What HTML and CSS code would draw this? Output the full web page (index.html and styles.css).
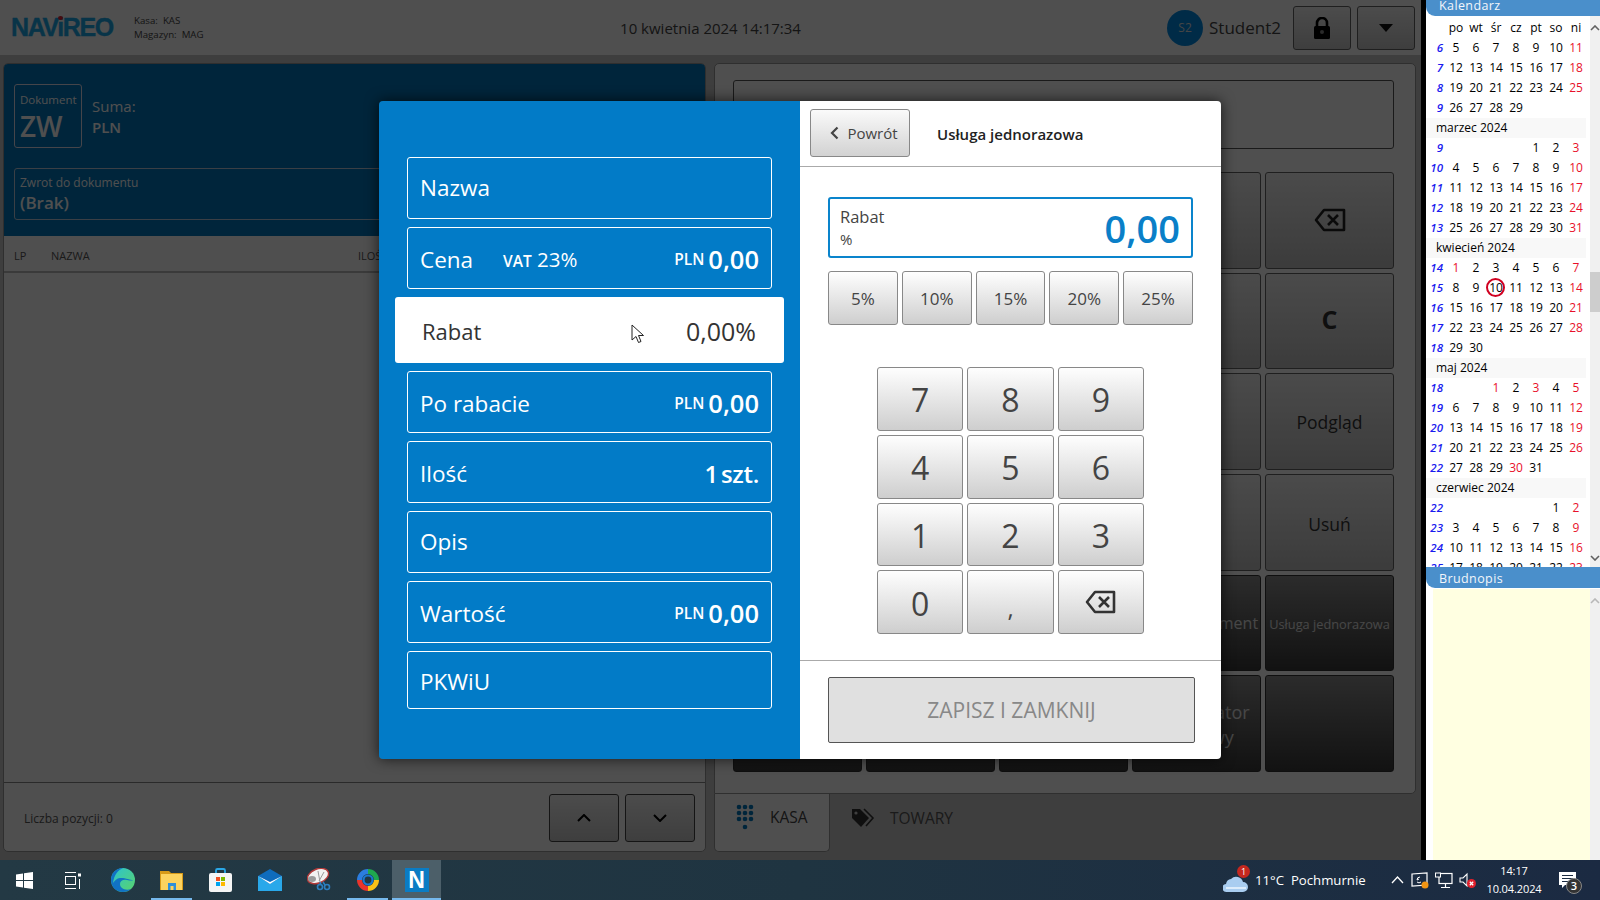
FILE: index.html
```html
<!DOCTYPE html>
<html lang="pl">
<head>
<meta charset="utf-8">
<title>Navireo Kasa</title>
<link rel="stylesheet" href="styles.css">
</head>
<body>
<div class="screen">
  <div class="app">
    <header class="topbar">
      <div class="brand">
        <div class="logo">NAV<span class="logo-i">i</span>REO</div>
        <div class="station"><div>Kasa:&nbsp; KAS</div><div>Magazyn:&nbsp; MAG</div></div>
      </div>
      <div class="clock">10 kwietnia 2024 14:17:34</div>
      <div class="userbox">
        <div class="avatar">S2</div>
        <div class="username">Student2</div>
        <button class="tool">
          <svg width="18" height="22" viewBox="0 0 18 22"><path d="M4 9V6a5 5 0 0 1 10 0v3" fill="none" stroke="#000" stroke-width="2.6"/><rect x="1" y="9" width="16" height="13" rx="1.5" fill="#000"/><circle cx="9" cy="15" r="2" fill="#888"/></svg>
        </button>
        <button class="tool"><svg width="14" height="8" viewBox="0 0 14 8"><path d="M0 0h14L7 8z" fill="#111"/></svg></button>
      </div>
    </header>

    <div class="work">
      <section class="receipt">
        <div class="doc-head">
          <div class="doc-row">
            <div class="doc-type"><div class="doc-label">Dokument</div><div class="doc-code">ZW</div></div>
            <div class="doc-sum"><div>Suma:</div><div class="doc-cur">PLN</div></div>
          </div>
          <div class="doc-ref"><div class="doc-ref-label">Zwrot do dokumentu</div><div class="doc-ref-val">(Brak)</div></div>
        </div>
        <div class="table-head"><span class="th-lp">LP</span><span class="th-name">NAZWA</span><span>ILOŚĆ</span></div>
        <div class="table-body"></div>
        <div class="receipt-foot">
          <div class="count">Liczba pozycji: 0</div>
          <button class="pager"><svg width="14" height="8" viewBox="0 0 14 8"><path d="M1 7l6-6 6 6" fill="none" stroke="#000" stroke-width="2"/></svg></button>
          <button class="pager"><svg width="14" height="8" viewBox="0 0 14 8"><path d="M1 1l6 6 6-6" fill="none" stroke="#000" stroke-width="2"/></svg></button>
        </div>
      </section>

      <section class="register">
        <div class="cash">
          <div class="search"></div>
          <div class="keys">
            <div class="key"></div><div class="key"></div><div class="key"></div><div class="key"></div>
            <div class="key"><svg width="32" height="24" viewBox="0 0 32 24"><path d="M10 2h20v20H10L2 12z" fill="none" stroke="#222" stroke-width="2.6" stroke-linejoin="round"/><path d="M14 7l10 10M24 7L14 17" stroke="#222" stroke-width="2.6"/></svg></div>
            <div class="key"></div><div class="key"></div><div class="key"></div><div class="key"></div>
            <div class="key key-c">C</div>
            <div class="key"></div><div class="key"></div><div class="key"></div><div class="key"></div>
            <div class="key">Podgląd</div>
            <div class="key"></div><div class="key"></div><div class="key"></div><div class="key"></div>
            <div class="key key-low">Usuń</div>
            <div class="key dark"></div><div class="key dark"></div><div class="key dark"></div>
            <div class="key dark">Nowy dokument</div>
            <div class="key dark key-small">Usługa jednorazowa</div>
            <div class="key dark"></div><div class="key dark"></div><div class="key dark"></div>
            <div class="key dark key-big">Konfigurator<br>kwotowy</div>
            <div class="key dark"></div>
          </div>
        </div>
        <div class="tabs">
          <div class="tab tab-on">
            <svg width="18" height="26" viewBox="0 0 18 26"><g fill="#0077be"><circle cx="3" cy="3" r="2.3"/><circle cx="9" cy="3" r="2.3"/><circle cx="15" cy="3" r="2.3"/><circle cx="3" cy="9" r="2.3"/><circle cx="9" cy="9" r="2.3"/><circle cx="15" cy="9" r="2.3"/><circle cx="3" cy="15" r="2.3"/><circle cx="9" cy="15" r="2.3"/><circle cx="15" cy="15" r="2.3"/><circle cx="9" cy="23" r="2.3"/></g></svg>
            <span>KASA</span>
          </div>
          <div class="tab">
            <svg width="24" height="20" viewBox="0 0 24 20"><path d="M1 1h8l9 9-8 9-9-9z" fill="#333"/><circle cx="5" cy="5" r="1.6" fill="#ccc"/><path d="M13 1l9 9-7 8" fill="none" stroke="#333" stroke-width="1.6"/></svg>
            <span>TOWARY</span>
          </div>
        </div>
      </section>
    </div>

    <div class="dim"></div>

    <div class="modal">
      <div class="fields">
        <div class="field field-up"><span class="label">Nazwa</span></div>
        <div class="field"><span class="label">Cena</span><span class="vat"><b>VAT</b> 23%</span><span class="amount"><b>PLN</b> <strong>0,00</strong></span></div>
        <div class="field-active"><span>Rabat</span><span class="pct">0,00%</span>
          <svg class="cursor" width="13" height="20" viewBox="0 0 13 20"><path d="M1 1v15l4-3.5 2.5 6 2.5-1-2.5-6h5z" fill="#fff" stroke="#222" stroke-width="1"/></svg>
        </div>
        <div class="field"><span class="label">Po rabacie</span><span class="amount"><b>PLN</b> <strong>0,00</strong></span></div>
        <div class="field"><span class="label">Ilość</span><span class="amount"><strong class="qty">1 szt.</strong></span></div>
        <div class="field field-up"><span class="label">Opis</span></div>
        <div class="field"><span class="label">Wartość</span><span class="amount"><b>PLN</b> <strong>0,00</strong></span></div>
        <div class="field field-last"><span class="label">PKWiU</span></div>
      </div>
      <div class="editor">
        <div class="editor-head">
          <button class="back"><svg width="9" height="14" viewBox="0 0 9 14"><path d="M7.5 1.5L2 7l5.5 5.5" fill="none" stroke="#444" stroke-width="2.2"/></svg>Powrót</button>
          <div class="editor-title">Usługa jednorazowa</div>
        </div>
        <div class="entry">
          <div><div class="entry-label">Rabat</div><div class="entry-unit">%</div></div>
          <div class="entry-val">0,00</div>
        </div>
        <div class="presets">
          <button class="btn">5%</button><button class="btn">10%</button><button class="btn">15%</button><button class="btn">20%</button><button class="btn">25%</button>
        </div>
        <div class="pad">
          <button class="btn">7</button><button class="btn">8</button><button class="btn">9</button>
          <button class="btn">4</button><button class="btn">5</button><button class="btn">6</button>
          <button class="btn">1</button><button class="btn">2</button><button class="btn">3</button>
          <button class="btn">0</button><button class="btn comma">,</button>
          <button class="btn btn-ic"><svg width="31" height="24" viewBox="0 0 31 24"><path d="M10 2h19v20H10L2 12z" fill="none" stroke="#333" stroke-width="2.6" stroke-linejoin="round"/><path d="M14 7l10 10M24 7L14 17" stroke="#333" stroke-width="2.6"/></svg></button>
        </div>
        <div class="save-bar"><button class="save">ZAPISZ I ZAMKNIJ</button></div>
      </div>
    </div>
  </div>

  <aside class="sidebar">
    <div class="side-title cal-title">Kalendarz</div>
    <div class="cal-wrap">
      <div class="cal">
        <span></span><span>po</span><span>wt</span><span>śr</span><span>cz</span><span>pt</span><span>so</span><span>ni</span>
        <i>6</i><span>5</span><span>6</span><span>7</span><span>8</span><span>9</span><span>10</span><span class="r">11</span>
        <i>7</i><span>12</span><span>13</span><span>14</span><span>15</span><span>16</span><span>17</span><span class="r">18</span>
        <i>8</i><span>19</span><span>20</span><span>21</span><span>22</span><span>23</span><span>24</span><span class="r">25</span>
        <i>9</i><span>26</span><span>27</span><span>28</span><span>29</span>
        <div class="month">marzec 2024</div>
        <i>9</i><span></span><span></span><span></span><span></span><span>1</span><span>2</span><span class="r">3</span>
        <i>10</i><span>4</span><span>5</span><span>6</span><span>7</span><span>8</span><span>9</span><span class="r">10</span>
        <i>11</i><span>11</span><span>12</span><span>13</span><span>14</span><span>15</span><span>16</span><span class="r">17</span>
        <i>12</i><span>18</span><span>19</span><span>20</span><span>21</span><span>22</span><span>23</span><span class="r">24</span>
        <i>13</i><span>25</span><span>26</span><span>27</span><span>28</span><span>29</span><span>30</span><span class="r">31</span>
        <div class="month">kwiecień 2024</div>
        <i>14</i><span class="r">1</span><span>2</span><span>3</span><span>4</span><span>5</span><span>6</span><span class="r">7</span>
        <i>15</i><span>8</span><span>9</span><span class="today">10</span><span>11</span><span>12</span><span>13</span><span class="r">14</span>
        <i>16</i><span>15</span><span>16</span><span>17</span><span>18</span><span>19</span><span>20</span><span class="r">21</span>
        <i>17</i><span>22</span><span>23</span><span>24</span><span>25</span><span>26</span><span>27</span><span class="r">28</span>
        <i>18</i><span>29</span><span>30</span>
        <div class="month">maj 2024</div>
        <i>18</i><span></span><span></span><span class="r">1</span><span>2</span><span class="r">3</span><span>4</span><span class="r">5</span>
        <i>19</i><span>6</span><span>7</span><span>8</span><span>9</span><span>10</span><span>11</span><span class="r">12</span>
        <i>20</i><span>13</span><span>14</span><span>15</span><span>16</span><span>17</span><span>18</span><span class="r">19</span>
        <i>21</i><span>20</span><span>21</span><span>22</span><span>23</span><span>24</span><span>25</span><span class="r">26</span>
        <i>22</i><span>27</span><span>28</span><span>29</span><span class="r">30</span><span>31</span>
        <div class="month">czerwiec 2024</div>
        <i>22</i><span></span><span></span><span></span><span></span><span></span><span>1</span><span class="r">2</span>
        <i>23</i><span>3</span><span>4</span><span>5</span><span>6</span><span>7</span><span>8</span><span class="r">9</span>
        <i>24</i><span>10</span><span>11</span><span>12</span><span>13</span><span>14</span><span>15</span><span class="r">16</span>
        <i>25</i><span>17</span><span>18</span><span>19</span><span>20</span><span>21</span><span>22</span><span class="r">23</span>
      </div>
      <div class="sbar">
        <svg class="sb-up" width="10" height="6" viewBox="0 0 10 6"><path d="M1 5l4-4 4 4" fill="none" stroke="#606060" stroke-width="1.6"/></svg>
        <div class="sb-thumb"></div>
        <svg class="sb-down" width="10" height="6" viewBox="0 0 10 6"><path d="M1 1l4 4 4-4" fill="none" stroke="#606060" stroke-width="1.6"/></svg>
      </div>
    </div>
    <div class="side-title">Brudnopis</div>
    <div class="note-wrap">
      <div class="note"></div>
      <div class="sbar">
        <svg class="sb-up" width="10" height="6" viewBox="0 0 10 6"><path d="M1 5l4-4 4 4" fill="none" stroke="#b8b8b8" stroke-width="1.6"/></svg>
      </div>
    </div>
  </aside>

  <footer class="taskbar">
    <div class="tb-app"><svg width="17" height="17" viewBox="0 0 17 17"><path d="M0 2.4l7-1v6.6H0zM8 1.2L17 0v8H8zM0 9h7v6.6l-7-1zM8 9h9v8l-9-1.2z" fill="#fff"/></svg></div>
    <div class="tb-app"><svg width="17" height="17" viewBox="0 0 17 17"><g fill="none" stroke="#fff" stroke-width="1"><path d="M0 .5h11M0 16.5h11"/><rect x=".5" y="4.5" width="10" height="8"/><path d="M14.5 7v10"/></g><rect x="13" y="1.5" width="3" height="3" fill="#fff"/></svg></div>
    <div class="tb-app"><svg width="24" height="24" viewBox="0 0 24 24"><defs><linearGradient id="e1" x1="0" y1="0" x2="1" y2="1"><stop offset="0" stop-color="#2bc3d2"/><stop offset="1" stop-color="#5ad36a"/></linearGradient></defs><circle cx="12" cy="12" r="12" fill="url(#e1)"/><path d="M12 0C5 0 0 5 0 12c0 7 5 12 12 12 3 0 6-1 8-3-6 2-11-1-11-5 0-3 3-5 7-4 3 .5 5 1 6 0-3 0-12-4-16-1-2 1-3 3-4 4C3 7 7 2 12 0z" fill="#1172c4"/></svg></div>
    <div class="tb-app"><svg width="23" height="21" viewBox="0 0 23 21"><path d="M0 1h9l2 2h12v17H0z" fill="#d79a18"/><rect x="1" y="4" width="21" height="16" fill="#fcd35f"/><path d="M8 13h8v7h-2.5v-4h-3v4H8z" fill="#2e8fd8"/></svg></div>
    <div class="tb-app"><svg width="23" height="24" viewBox="0 0 23 24"><path d="M7 6V2.5a1.5 1.5 0 0 1 1.5-1.5h6A1.5 1.5 0 0 1 16 2.5V6" fill="none" stroke="#2aa8e8" stroke-width="1.8"/><rect y="5" width="23" height="19" rx="2" fill="#f5f5f5"/><rect x="7" y="9" width="4" height="4" fill="#f25022"/><rect x="12" y="9" width="4" height="4" fill="#7fba00"/><rect x="7" y="14" width="4" height="4" fill="#00a4ef"/><rect x="12" y="14" width="4" height="4" fill="#ffb900"/></svg></div>
    <div class="tb-app"><svg width="24" height="22" viewBox="0 0 24 22"><path d="M0 7L12 0l12 7v15H0z" fill="#0f6cbd"/><path d="M0 7l12 8 12-8v15H0z" fill="#29a8ea"/><path d="M0 7l12 6 12-6-12 8z" fill="#fff"/></svg></div>
    <div class="tb-app"><svg width="24" height="24" viewBox="0 0 24 24"><ellipse cx="11" cy="8" rx="11" ry="7" transform="rotate(-22 11 8)" fill="#f2f2f2" stroke="#b23a3a" stroke-width="1.4"/><ellipse cx="5" cy="11" rx="4" ry="3" fill="#9a9a9a"/><path d="M11 3l2 11M17 4l-5 9" stroke="#999" stroke-width="1"/><circle cx="13" cy="19" r="2.5" fill="none" stroke="#2d7fc0" stroke-width="1.6"/><circle cx="20" cy="19" r="2.5" fill="none" stroke="#2d7fc0" stroke-width="1.6"/><path d="M13 14l1 3M16 14l2 3" stroke="#2d7fc0" stroke-width="1.6"/></svg></div>
    <div class="tb-app"><svg width="24" height="24" viewBox="0 0 24 24"><g fill="none" stroke-width="5"><path d="M3.5 12A8.5 8.5 0 0 1 12 3.5" stroke="#2b7de0"/><path d="M12 3.5A8.5 8.5 0 0 1 20.5 12" stroke="#1fa84f"/><path d="M20.5 12A8.5 8.5 0 0 1 12 20.5" stroke="#f9c116"/><path d="M12 20.5A8.5 8.5 0 0 1 3.5 12" stroke="#e8342c"/></g><circle cx="12" cy="12" r="4.5" fill="none" stroke="#1a78d0" stroke-width="2.2"/></svg></div>
    <div class="tb-app tb-active"><div class="n-icon">N</div></div>
    <div class="tray">
      <div class="weather">
        <svg width="25" height="22" viewBox="0 0 25 22"><path d="M4 21a4 4 0 0 1-1-8 6 6 0 0 1 5-5 7 7 0 0 1 12 3 5 5 0 0 1 0 10z" fill="#a9cdf0"/><path d="M3 17h20" stroke="#dcecfb" stroke-width="2"/></svg>
        <span class="wx-badge">1</span>
      </div>
      <div class="wx-text">11°C&nbsp; Pochmurnie</div>
      <svg class="tray-up" width="13" height="8" viewBox="0 0 13 8"><path d="M1 7l5.5-6L12 7" fill="none" stroke="#fff" stroke-width="1.3"/></svg>
      <div class="tray-ic"><svg width="18" height="17" viewBox="0 0 18 17"><path d="M1 2l15-1v12L1 14z" fill="none" stroke="#fff" stroke-width="1.2"/><path d="M9 5a3 3 0 0 0-3 3l2-1M6 10a3 3 0 0 0 4 0" fill="none" stroke="#fff"/><circle cx="14" cy="13" r="3.5" fill="#f29513"/></svg></div>
      <div class="tray-ic"><svg width="18" height="17" viewBox="0 0 18 17"><rect x="4" y="1.5" width="13" height="10" fill="none" stroke="#fff" stroke-width="1.2"/><rect x=".5" y="1" width="5" height="4" fill="#1c2c42" stroke="#fff"/><path d="M10.5 12v3M6 15.5h9" stroke="#fff" stroke-width="1.2"/></svg></div>
      <div class="tray-ic"><svg width="18" height="17" viewBox="0 0 18 17"><path d="M1 6h3l4-4v12l-4-4H1z" fill="none" stroke="#fff" stroke-width="1.1"/><circle cx="12.5" cy="11.5" r="4.5" fill="#e0202c"/><path d="M10.8 9.800l3.4 3.4M14.2 9.800l-3.4 3.4" stroke="#fff" stroke-width="1.3"/></svg></div>
      <div class="tb-clock"><div>14:17</div><div>10.04.2024</div></div>
      <div class="notif">
        <svg width="17" height="16" viewBox="0 0 17 16"><path d="M0 0h17v13H6l-3 3v-3H0z" fill="#fff"/><path d="M3 3.5h11M3 6.5h11M3 9.5h8" stroke="#1c2c42" stroke-width="1"/></svg>
        <span class="notif-badge">3</span>
      </div>
    </div>
  </footer>
</div>
</body>
</html>
```

FILE: styles.css
```css
* { box-sizing: border-box; }
html, body { margin: 0; padding: 0; background: #000; }
body { font-family: "Open Sans", "Liberation Sans", sans-serif; }
button { font-family: inherit; padding: 0; margin: 0; cursor: default; }

.screen {
  width: 1600px; height: 900px; overflow: hidden;
  display: grid;
  grid-template-columns: 1421px 174px;
  grid-template-rows: 860px 40px;
  column-gap: 5px;
}

/* application behind the dialog */
.app {
  position: relative; overflow: hidden;
  display: flex; flex-direction: column;
  background: #c8c8c8;
}
.topbar {
  height: 55px; flex: none; background: #fff;
  display: grid; grid-template-columns: 1fr auto 1fr; align-items: center;
}
.brand { display: flex; align-items: center; padding-left: 11px; }
.logo {
  font-family: "Liberation Sans", sans-serif; font-weight: 700; font-size: 25px;
  letter-spacing: -1.4px; color: #1aa8e8; width: 103px; line-height: 1;
  -webkit-text-stroke: .4px #1aa8e8;
}
.logo-i { position: relative; }
.logo-i::after {
  content: ""; position: absolute; left: 1px; top: 3px; width: 5px; height: 4px;
  border-radius: 50%; background: #e02030;
}
.station { margin-left: 20px; font-size: 9.7px; line-height: 14px; color: #444; }
.clock { font-size: 15px; color: #444; }
.userbox { display: flex; align-items: center; justify-content: flex-end; padding-right: 6px; }
.avatar {
  width: 36px; height: 36px; border-radius: 50%; background: #038be5; color: #ddd;
  display: flex; align-items: center; justify-content: center; font-size: 12px; margin-right: 6px;
}
.username { font-size: 17px; color: #444; margin-right: 12px; }
.tool {
  width: 58px; height: 44px; margin-left: 6px;
  display: flex; align-items: center; justify-content: center;
  border: 1px solid #666; border-radius: 3px;
  background: linear-gradient(#f4f4f4, #c8c8c8);
}
.tool:first-of-type { margin-left: 0; }

.work { flex: 1; display: flex; gap: 8px; padding: 8px 5px 8px 3px; min-height: 0; }
.receipt, .register { min-width: 0; display: flex; flex-direction: column; }
.receipt { flex: none; width: 703px; background: #fff; border: 1px solid #999; border-radius: 5px; overflow: hidden; }
.register { flex: 1; min-height: 0; }

.doc-head { height: 172px; flex: none; background: #0077be; padding: 20px 10px 0 10px; color: #fff; }
.doc-row { display: flex; }
.doc-type { width: 68px; height: 64px; border: 1px solid #dde; border-radius: 3px; padding: 7px 5px; }
.doc-label { font-size: 11.5px; line-height: 16px; }
.doc-code { font-size: 28px; line-height: 36px; font-weight: 600; }
.doc-sum { margin: 12px 0 0 10px; font-size: 15px; line-height: 21px; }
.doc-cur { font-weight: 600; }
.doc-ref { margin-top: 20px; height: 52px; width: 680px; border: 1px solid #bcd; border-radius: 3px; padding: 6px 5px; }
.doc-ref-label { font-size: 12px; line-height: 16px; }
.doc-ref-val { font-size: 17px; line-height: 24px; font-weight: 600; }
.table-head {
  height: 37px; flex: none; display: flex; align-items: center; padding: 3px 0 0 10px;
  font-size: 11px; color: #555; border-bottom: 2px solid #bbb;
}
.th-lp { width: 37px; }
.th-name { width: 307px; }
.table-body { flex: 1; }
.receipt-foot {
  height: 69px; flex: none; border-top: 1px solid #888;
  display: flex; align-items: center; padding: 1px 10px 0 20px; gap: 6px;
}
.count { font-size: 12px; color: #555; margin-right: auto; padding-top: 2px; }
.pager {
  width: 70px; height: 48px;
  display: flex; align-items: center; justify-content: center;
  border: 1px solid #444; border-radius: 3px; background: linear-gradient(#f4f4f4, #c8c8c8);
}

.cash {
  height: 731px; flex: none; background: #fff; border: 1px solid #999; border-radius: 5px 5px 5px 0;
  padding: 16px 21px 0 18px;
}
.search { height: 69px; border: 1px solid #555; border-radius: 3px; }
.keys {
  margin-top: 23px; display: grid;
  grid-template-columns: repeat(5, 1fr); grid-auto-rows: 96.7px; gap: 4px;
}
.key {
  display: flex; align-items: center; justify-content: center; text-align: center;
  border: 1px solid #666; border-radius: 3px; font-size: 17.5px; color: #333;
  background: linear-gradient(#f0f0f0, #c0c0c0);
}
.key-c { font-size: 25px; font-weight: 700; padding-bottom: 4px; }
.key-low { padding-top: 3px; }
.key.dark { background: linear-gradient(#8c8c8c, #3a3a3a); border-color: #333; color: #e4e4e4; font-size: 16px; }
.key-small.dark { font-size: 12.8px; padding-top: 2px; }
.key-big.dark { font-size: 18px; line-height: 25px; padding-top: 2px; }

.tabs { height: 58px; flex: none; display: flex; }
.tab {
  display: flex; align-items: center; padding: 0 0 11px 22px; gap: 15px;
  font-size: 15.5px; color: #555;
}
.tab-on {
  width: 116px; background: #fff; border: 1px solid #999; border-top: 0; border-radius: 0 0 5px 5px;
  padding-left: 21px; gap: 16px; color: #444;
}
.tab-on + .tab { padding-left: 21px; }

.dim { position: absolute; inset: 0; background: rgba(0, 0, 0, .69); }

/* dialog */
.modal {
  position: absolute; left: 379px; top: 101px; width: 842px; height: 658px;
  display: grid; grid-template-columns: 421px 421px;
  border-radius: 4px; overflow: hidden;
  box-shadow: 0 0 14px rgba(0, 0, 0, .7);
}
.fields {
  background: #027bc7; padding: 56px 28px 0;
  display: flex; flex-direction: column; gap: 8px; color: #fff;
}
.field {
  height: 62px; flex: none; border: 1px solid #fff; border-radius: 3px;
  display: flex; align-items: center; padding: 2px 12px 0;
}
.field-up { padding: 0 12px 2px; }
.field-last { height: 58px; }
.label { font-size: 22.5px; }
.vat { font-size: 20.5px; margin-left: 30px; }
.vat b { font-size: 15.5px; font-weight: 600; }
.amount { margin-left: auto; display: flex; align-items: center; gap: 4px; }
.amount b { font-size: 15.5px; font-weight: 600; }
.amount strong { font-size: 25.5px; font-weight: 600; }
.amount .qty { font-size: 24px; word-spacing: -3px; letter-spacing: -.3px; }
.field-active {
  position: relative;
  height: 66px; flex: none; margin: 0 -12px; background: #fff; border-radius: 3px; color: #333;
  display: flex; align-items: center; justify-content: space-between; padding: 2px 28px 0 27px;
  font-size: 22px;
}
.pct { font-size: 25px; font-weight: 500; }
.cursor { position: absolute; left: 236px; top: 27px; }

.editor { background: #fff; display: flex; flex-direction: column; }
.editor-head {
  height: 66px; flex: none; border-bottom: 1px solid #aaa;
  display: flex; align-items: center; padding: 0 0 1px 10px;
}
.back {
  width: 100px; height: 48px; border: 1px solid #888; border-radius: 3px;
  background: linear-gradient(#fafafa, #d2d2d2);
  display: flex; align-items: center; justify-content: center; gap: 8px;
  font-size: 15px; color: #444; padding-left: 8px;
}
.editor-title { margin-left: 27px; padding-top: 2px; font-size: 15px; font-weight: 600; color: #222; }
.entry {
  margin: 30px 0 0 28px; width: 365px; height: 61px; flex: none;
  border: 2px solid #0a84cc; border-radius: 3px;
  display: flex; justify-content: space-between; align-items: center; padding: 1px 11px 0 10px;
}
.entry-label { font-size: 16.5px; line-height: 22px; color: #444; }
.entry-unit { font-size: 15px; line-height: 23px; color: #444; }
.entry-val { font-size: 38px; font-weight: 600; color: #0a7fc8; }
.btn {
  display: flex; align-items: center; justify-content: center;
  border: 1px solid #888; border-radius: 3px;
  background: linear-gradient(#fefefe, #cecece); color: #444;
}
.presets {
  margin: 13px 0 0 28px; width: 365px; flex: none; height: 54px;
  display: grid; grid-template-columns: repeat(5, 1fr); gap: 4px;
}
.presets .btn { font-size: 17px; }
.pad {
  margin: 42px 0 0 77px; width: 267px; flex: none;
  display: grid; grid-template-columns: repeat(3, 1fr); grid-auto-rows: 63.75px; gap: 4px;
}
.pad .btn { font-size: 32px; padding-top: 2px; }
.pad .comma { font-size: 24px; padding-top: 10px; }
.pad .btn-ic { padding-top: 0; }
.save-bar { margin-top: 26px; border-top: 1px solid #aaa; padding: 16px 0 0 28px; flex: 1; }
.save {
  width: 367px; height: 66px; background: #e0e0e0; border: 1px solid #555; border-radius: 2px;
  font-size: 21px; font-weight: 500; color: #888;
}

/* right sidebar */
.sidebar { background: #fff; display: flex; flex-direction: column; min-height: 0; }
.side-title {
  height: 21px; flex: none; background: #4a8fcb; color: #f2f6fa;
  border-radius: 0 0 0 9px; padding-left: 13px;
  font-size: 12.5px; letter-spacing: .4px; line-height: 23px;
}
.cal-title { height: 16px; line-height: 12px; }
.cal-wrap { height: 551px; flex: none; display: flex; overflow: hidden; }
.cal {
  width: 164px; flex: none; padding-top: 2px; align-self: flex-start;
  display: grid; grid-template-columns: repeat(8, 20px); grid-auto-rows: 20px;
  font-size: 12px; line-height: 20px; text-align: center; color: #000;
}
.cal i { font-weight: 600; color: #1a1aef; text-align: right; padding-right: 3px; font-size: 11.5px; }
.cal .r { color: #e8102a; }
.month { grid-column: 1 / -1; background: #f8f8f8; text-align: left; padding-left: 10px; }
.today { position: relative; }
.today::after {
  content: ""; position: absolute; left: 0; top: 0; width: 19px; height: 19px; box-sizing: border-box;
  border: 2px solid #d00020; border-radius: 50%;
}
.sbar { width: 10px; flex: none; background: #f0f0f0; display: flex; flex-direction: column; }
.sb-up { margin-top: 9px; flex: none; }
.sb-thumb { height: 40px; margin-top: 241px; background: #cdcdcd; flex: none; }
.sb-down { margin-top: auto; margin-bottom: 6px; flex: none; }
.note-wrap { flex: 1; display: flex; padding-left: 7px; min-height: 0; padding-top: 1px; }
.note { flex: 1; background: #ffffe1; }

/* taskbar */
.taskbar {
  grid-column: 1 / -1; height: 40px;
  background: linear-gradient(90deg, #233944, #1f3441 50%, #1b2a42);
  display: flex; align-items: center; position: relative; color: #fff;
}
.tb-app { width: 49px; height: 40px; display: flex; align-items: center; justify-content: center; flex: none; position: relative; }
.tb-app:nth-child(4)::after, .tb-app:nth-child(8)::after, .tb-active::after {
  content: ""; position: absolute; left: 4px; right: 4px; bottom: 0; height: 2px; background: #76b9ed;
}
.tb-active { background: #4c5f69; }
.tb-active::after { left: 0; right: 0; }
.n-icon {
  width: 24px; height: 24px; background: #0a7cc4; color: #fff;
  font-family: "Liberation Sans", sans-serif; font-weight: 700; font-size: 23px; line-height: 24px; text-align: center;
}
.tray { margin-left: auto; display: flex; align-items: center; padding-right: 16px; }
.weather { position: relative; width: 25px; height: 26px; display: flex; align-items: flex-end; margin-right: 7px; }
.wx-badge {
  position: absolute; right: -2px; top: -2px; width: 13px; height: 13px; border-radius: 50%;
  background: #c4271f; color: #fff; font-size: 9px; line-height: 13px; text-align: center;
}
.wx-text { font-size: 13.2px; width: 136px; }
.tray-up { margin-right: 4px; flex: none; }
.tray-ic { width: 24px; display: flex; justify-content: center; }
.tb-clock { width: 68px; margin-right: 2px; text-align: center; font-size: 11px; line-height: 18px; letter-spacing: -.1px; }
.notif { position: relative; width: 34px; display: flex; justify-content: center; }
.notif-badge {
  position: absolute; left: 16px; top: 6px; width: 16px; height: 16px; border-radius: 50%;
  background: #333; border: 1px solid #888; color: #fff; font-size: 11px; line-height: 14px; text-align: center; font-weight: 600;
}
```
